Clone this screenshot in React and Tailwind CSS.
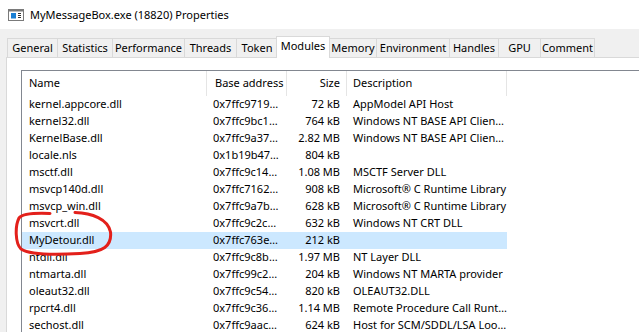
import React from "react";

const tabs = [
  { label: "General", w: "w-[50px]" },
  { label: "Statistics", w: "w-[55px]" },
  { label: "Performance", w: "w-[72px]" },
  { label: "Threads", w: "w-[52px]" },
  { label: "Token", w: "w-[41px]" },
  { label: "Modules", w: "w-[54px]", active: true },
  { label: "Memory", w: "w-[47px]" },
  { label: "Environment", w: "w-[73px]" },
  { label: "Handles", w: "w-[49px]" },
  { label: "GPU", w: "w-[42px]" },
  { label: "Comment", w: "w-[55px]", last: true },
];

const modules = [
  ["kernel.appcore.dll", "0x7ffc9719…", "72 kB", "AppModel API Host"],
  ["kernel32.dll", "0x7ffc9bc1…", "764 kB", "Windows NT BASE API Clien…"],
  ["KernelBase.dll", "0x7ffc9a37…", "2.82 MB", "Windows NT BASE API Clien…"],
  ["locale.nls", "0x1b19b47…", "804 kB", ""],
  ["msctf.dll", "0x7ffc9c14…", "1.08 MB", "MSCTF Server DLL"],
  ["msvcp140d.dll", "0x7ffc7162…", "908 kB", "Microsoft® C Runtime Library"],
  ["msvcp_win.dll", "0x7ffc9a7b…", "628 kB", "Microsoft® C Runtime Library"],
  ["msvcrt.dll", "0x7ffc9c2c…", "632 kB", "Windows NT CRT DLL"],
  ["MyDetour.dll", "0x7ffc763e…", "212 kB", "", true],
  ["ntdll.dll", "0x7ffc9c8b…", "1.97 MB", "NT Layer DLL"],
  ["ntmarta.dll", "0x7ffc99c2…", "204 kB", "Windows NT MARTA provider"],
  ["oleaut32.dll", "0x7ffc9c54…", "820 kB", "OLEAUT32.DLL"],
  ["rpcrt4.dll", "0x7ffc9c36…", "1.14 MB", "Remote Procedure Call Runt…"],
  ["sechost.dll", "0x7ffc9aac…", "624 kB", "Host for SCM/SDDL/LSA Loo…"],
];

function WindowIcon() {
  return (
    <svg width="16" height="12" viewBox="0 0 16 12" className="shrink-0">
      <rect x="0.5" y="0.5" width="15" height="11" fill="#fff" stroke="#7a7a7a" />
      <rect x="0" y="0" width="16" height="2.5" fill="#7a7a7a" />
      <rect x="3" y="4" width="5" height="5.5" fill="#1a7fd4" />
      <rect x="10" y="4" width="3" height="1" fill="#333" />
      <rect x="10" y="6" width="3" height="1" fill="#333" />
      <rect x="10" y="8" width="3" height="1" fill="#333" />
    </svg>
  );
}

export default function App() {
  return (
    <div
      className="relative w-[639px] h-[332px] overflow-hidden bg-[#f0f0f0] text-[11px] text-black whitespace-nowrap"
      style={{ fontFamily: '"Segoe UI", "Noto Sans", sans-serif' }}
    >
      <div className="h-[29px] bg-white flex items-center gap-[6px] pl-[8px]">
        <WindowIcon />
        <span className="text-[11px] leading-none">MyMessageBox.exe (18820) Properties</span>
      </div>

      <div className="h-[28px] pl-[7px] flex items-end">
        {tabs.map((t) =>
          t.active ? (
            <div
              key={t.label}
              className={`${t.w} h-[22px] -mx-px -mb-px relative z-10 bg-white border border-b-0 border-[#d9d9d9] flex items-center justify-center pb-[2px]`}
            >
              {t.label}
            </div>
          ) : (
            <div
              key={t.label}
              className={`${t.w} h-[19px] border-t border-l ${t.last ? "border-r" : ""} border-[#d9d9d9] flex items-center justify-center pt-px`}
            >
              {t.label}
            </div>
          )
        )}
      </div>

      <div className="ml-[6px] h-[300px] bg-white border-l border-t border-[#d9d9d9] pl-[14px] pt-[12px]">
        <div className="h-full border-l border-t border-[#828790] bg-white">
          <div className="flex h-[25px] items-center">
            <div className="w-[185px] h-full pl-[7px] flex items-center border-r border-[#e5e5e5]">Name</div>
            <div className="w-[80px] h-full pl-[8px] flex items-center border-r border-[#e5e5e5]">Base address</div>
            <div className="w-[60px] h-full pr-[6px] flex items-center justify-end border-r border-[#e5e5e5]">Size</div>
            <div className="w-[160px] h-full pl-[6px] flex items-center border-r border-[#e5e5e5]">Description</div>
          </div>
          {modules.map(([name, base, size, desc, sel]) => (
            <div key={name} className={`flex w-[485px] h-[17px] items-center ${sel ? "bg-[#cce8ff]" : ""}`}>
              <div className="w-[185px] shrink-0 pl-[7px]">{name}</div>
              <div className="w-[80px] shrink-0 pl-[6px]">{base}</div>
              <div className="w-[60px] shrink-0 pr-[7px] text-right">{size}</div>
              <div className="w-[160px] shrink-0 pl-[6px]">{desc}</div>
            </div>
          ))}
        </div>
      </div>

      <svg className="absolute inset-0 pointer-events-none" width="639" height="332" viewBox="0 0 639 332">
        <path
          d="M75 212.5 C92 213, 108 219, 110.5 232 C112 246, 104 252, 80 253.5 C55 255, 30 255, 21 249 C15 243, 15 226, 19 218 C23 213, 38 213, 50 213.5"
          fill="none"
          stroke="#e3201b"
          strokeWidth="3"
          strokeLinecap="round"
        />
      </svg>
    </div>
  );
}
